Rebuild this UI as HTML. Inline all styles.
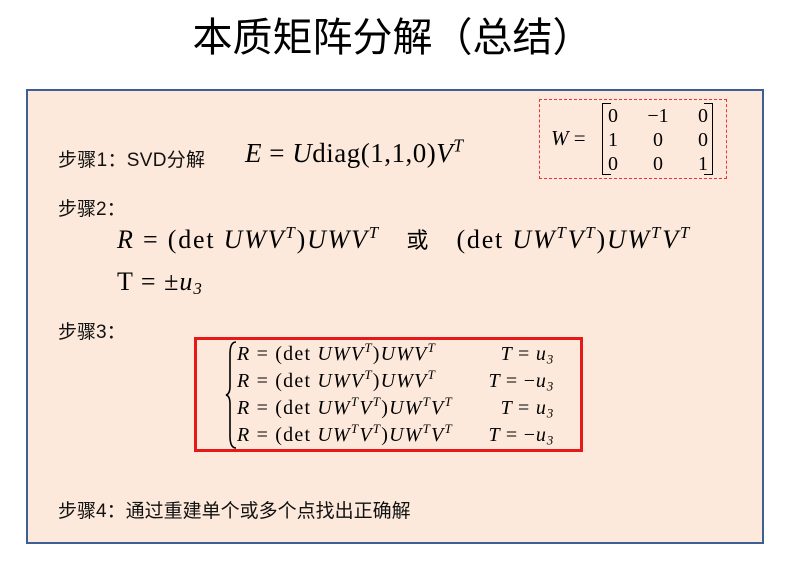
<!DOCTYPE html>
<html><head><meta charset="utf-8"><style>
body{margin:0;width:785px;height:562px;background:#fff;position:relative;overflow:hidden;font-family:"Liberation Sans","Noto Sans CJK SC",sans-serif;}
.a{position:absolute;white-space:nowrap;}
.m{font-family:"Liberation Serif",serif;font-style:italic;}
.r{font-style:normal;}
sup{font-size:0.65em;vertical-align:0.6em;line-height:0}
sub{font-size:0.65em;vertical-align:-0.25em;line-height:0}
.cj{font-size:19px;color:#111;}
</style></head><body>
<div class="a" style="left:0;width:785px;top:5px;text-align:center;font-size:40px;color:#000;">本质矩阵分解（总结）</div>
<div class="a" style="left:26px;top:89px;width:734px;height:451px;background:#fde9db;border:2px solid #3e5f93;"></div>

<div class="a cj" style="left:58px;top:145px;letter-spacing:0.3px">步骤1：SVD分解</div>
<div class="a m" style="left:245px;top:138px;font-size:27px;letter-spacing:0.5px">E <span class="r">=</span> U<span class="r">diag(1,1,0)</span>V<sup>T</sup></div>

<div class="a" style="left:539px;top:99px;width:186px;height:78px;border:1px dashed #e33;"></div>
<div class="a m" style="left:551px;top:126px;font-size:21px;">W <span class="r">=</span></div>
<div class="a" style="left:602px;top:103px;width:8px;height:70px;border:1.5px solid #000;border-right:none;"></div>
<div class="a" style="left:704px;top:103px;width:8px;height:70px;border:1.5px solid #000;border-left:none;"></div>
<div class="a m r" style="left:608px;top:104px;font-size:20px;line-height:24px;">
<div style="display:grid;grid-template-columns:30px 40px 30px;text-align:center;width:100px;">
<span style="text-align:left">0</span><span>−1</span><span style="text-align:right">0</span>
<span style="text-align:left">1</span><span>0</span><span style="text-align:right">0</span>
<span style="text-align:left">0</span><span>0</span><span style="text-align:right">1</span></div></div>

<div class="a cj" style="left:58px;top:194px;">步骤2：</div>
<div class="a m" style="left:117px;top:223px;font-size:26px;letter-spacing:1.8px">R <span class="r">= (det</span> UWV<sup>T</sup><span class="r">)</span>UWV<sup>T</sup> <span class="r" style="font-family:'Noto Sans CJK SC';font-size:22px;margin:0 18px 0 18px">或</span> <span class="r">(det</span> UW<sup>T</sup>V<sup>T</sup><span class="r">)</span>UW<sup>T</sup>V<sup>T</sup></div>
<div class="a m" style="left:117px;top:267px;font-size:26px;letter-spacing:1px"><span class="r">T = ±</span>u<sub>3</sub></div>

<div class="a cj" style="left:58px;top:317px;">步骤3：</div>
<div class="a" style="left:194px;top:337px;width:383px;height:109px;border:3px solid #e81818;"></div>
<svg class="a" style="left:224px;top:340px" width="14" height="110"><path d="M12 2 Q6 2 6 14 L6 46 Q6 54 2 55 Q6 56 6 64 L6 96 Q6 108 12 108" fill="none" stroke="#000" stroke-width="1.6"/></svg>
<div class="a m" style="left:237px;top:341px;font-size:20px;line-height:27px;letter-spacing:1.2px">
R <span class="r">= (det</span> UWV<sup>T</sup><span class="r">)</span>UWV<sup>T</sup><br>
R <span class="r">= (det</span> UWV<sup>T</sup><span class="r">)</span>UWV<sup>T</sup><br>
R <span class="r">= (det</span> UW<sup>T</sup>V<sup>T</sup><span class="r">)</span>UW<sup>T</sup>V<sup>T</sup><br>
R <span class="r">= (det</span> UW<sup>T</sup>V<sup>T</sup><span class="r">)</span>UW<sup>T</sup>V<sup>T</sup></div>
<div class="a m" style="left:462px;width:92px;text-align:right;top:341px;font-size:20px;line-height:27px;letter-spacing:0.8px">
T <span class="r">=</span> u<sub>3</sub><br>T <span class="r">= −</span>u<sub>3</sub><br>T <span class="r">=</span> u<sub>3</sub><br>T <span class="r">= −</span>u<sub>3</sub></div>

<div class="a cj" style="left:58px;top:496px;">步骤4：通过重建单个或多个点找出正确解</div>
</body></html>
